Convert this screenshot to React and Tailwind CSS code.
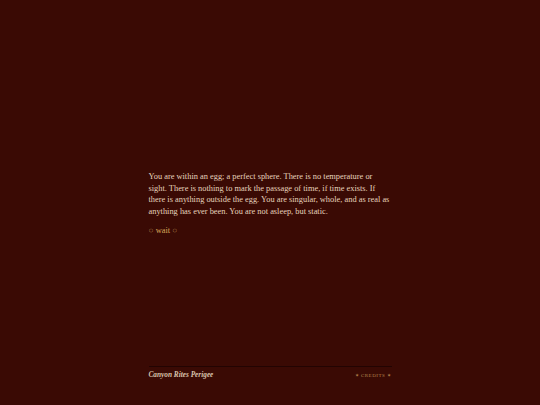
export default function App() {
  return (
    <div className="w-[540px] h-[405px] bg-[#3a0a04] flex flex-col items-center" style={{ fontFamily: '"Liberation Serif", "Times New Roman", serif' }}>
      <div className="w-[243px] flex-1 pt-[171px]">
        <p className="w-[242px] text-[8.4px] leading-[11.5px] text-[#e6d3bd]">
          You are within an egg; a perfect sphere. There is no temperature or sight. There is nothing to mark the passage of time, if time exists. If there is anything outside the egg. You are singular, whole, and as real as anything has ever been. You are not asleep, but static.
        </p>
        <p className="mt-[8px] text-[8.4px] leading-[11px] text-[#d9a75a]">
          <span className="text-[#b0804a]">○</span> wait <span className="text-[#b0804a]">○</span>
        </p>
      </div>
      <div className="w-[243px] border-t border-[#220402] pt-[3px] pb-[24px] flex items-center justify-between">
        <span className="italic font-bold text-[7.3px] text-[#d9c3ad]">Canyon Rites Perigee</span>
        <span className="text-[5px] tracking-[0.5px] text-[#b5854c]">✶ CREDITS ✶</span>
      </div>
    </div>
  );
}
